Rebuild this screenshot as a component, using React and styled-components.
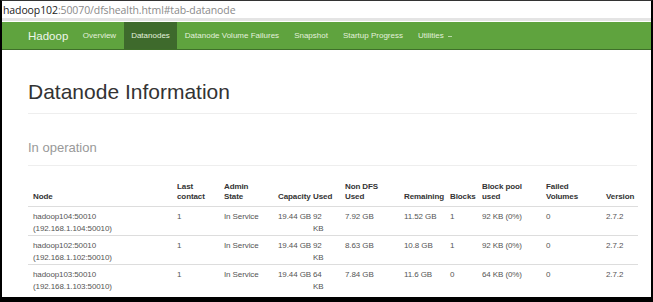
import React from "react";
import styled, { createGlobalStyle } from "styled-components";

const GlobalStyle = createGlobalStyle`
  html, body {
    margin: 0;
    padding: 0;
    background: #000;
  }
  body {
    font-family: "Liberation Sans", Arial, sans-serif;
  }
`;

const nodes = [
  { name: "hadoop104:50010", ip: "(192.168.1.104:50010)", used: ["92", "KB"], nonDfs: "7.92 GB", remaining: "11.52 GB", blocks: "1", pool: "92 KB (0%)" },
  { name: "hadoop102:50010", ip: "(192.168.1.102:50010)", used: ["92", "KB"], nonDfs: "8.63 GB", remaining: "10.8 GB", blocks: "1", pool: "92 KB (0%)" },
  { name: "hadoop103:50010", ip: "(192.168.1.103:50010)", used: ["64", "KB"], nonDfs: "7.84 GB", remaining: "11.6 GB", blocks: "0", pool: "64 KB (0%)" },
];

const colWidths = [144, 47, 54, 35, 32, 59, 46, 32, 64, 60, 37];

function App() {
  return (
    <>
      <GlobalStyle />
      <Frame>
        <AddressBar>
          <Host>hadoop102</Host>
          <Path>:50070/dfshealth.html#tab-datanode</Path>
        </AddressBar>
        <NavBar>
          <Brand>Hadoop</Brand>
          <NavItem>Overview</NavItem>
          <NavItem $active>Datanodes</NavItem>
          <NavItem>Datanode Volume Failures</NavItem>
          <NavItem>Snapshot</NavItem>
          <NavItem>Startup Progress</NavItem>
          <NavItem>
            Utilities <Caret />
          </NavItem>
        </NavBar>
        <Content>
          <PageTitle>Datanode Information</PageTitle>
          <SectionTitle>In operation</SectionTitle>
          <Table>
            <colgroup>
              {colWidths.map((w, i) => (
                <col key={i} style={{ width: w }} />
              ))}
            </colgroup>
            <thead>
              <tr>
                <Th>Node</Th>
                <Th>Last<br />contact</Th>
                <Th>Admin<br />State</Th>
                <Th>Capacity</Th>
                <Th>Used</Th>
                <Th>Non DFS<br />Used</Th>
                <Th>Remaining</Th>
                <Th>Blocks</Th>
                <Th>Block pool<br />used</Th>
                <Th>Failed<br />Volumes</Th>
                <Th>Version</Th>
              </tr>
            </thead>
            <tbody>
              {nodes.map((n) => (
                <tr key={n.name}>
                  <Td>{n.name}<br />{n.ip}</Td>
                  <Td>1</Td>
                  <Td>In Service</Td>
                  <Td>19.44 GB</Td>
                  <Td>{n.used[0]}<br />{n.used[1]}</Td>
                  <Td>{n.nonDfs}</Td>
                  <Td>{n.remaining}</Td>
                  <Td>{n.blocks}</Td>
                  <Td>{n.pool}</Td>
                  <Td>0</Td>
                  <Td>2.7.2</Td>
                </tr>
              ))}
            </tbody>
          </Table>
        </Content>
      </Frame>
    </>
  );
}

export default App;

const Frame = styled.div`
  box-sizing: border-box;
  width: 653px;
  height: 302px;
  background: #fff;
  border-left: 2px solid #000;
  border-right: 2px solid #000;
  border-bottom: 5px solid #000;
  border-top: 1px solid #333;
  overflow: hidden;
`;

const AddressBar = styled.div`
  height: 17px;
  padding-left: 1px;
  display: flex;
  align-items: center;
  font-family: "Open Sans", "Liberation Sans", sans-serif;
  font-size: 10.5px;
  letter-spacing: -0.1px;
  border-bottom: 3px solid #e4e4e4;
`;

const Host = styled.span`
  color: #222;
`;

const Path = styled.span`
  color: #8a8a8a;
`;

const NavBar = styled.div`
  margin-top: 1px;
  height: 27px;
  background: #5fa33e;
  border-bottom: 1px solid #3f6f2a;
  display: flex;
  align-items: stretch;
  padding-left: 26px;
`;

const Brand = styled.div`
  display: flex;
  align-items: center;
  color: #eef6ea;
  font-size: 11.5px;
  margin-right: 7px;
`;

const NavItem = styled.div`
  display: flex;
  align-items: center;
  padding: 0 7.5px;
  font-size: 8px;
  color: #e3f0dc;
  background: ${(p) => (p.$active ? "#3e6a2c" : "transparent")};
`;

const Caret = styled.span`
  display: inline-block;
  width: 4px;
  height: 1px;
  margin-left: 4px;
  margin-top: 2px;
  background: #b9d9a8;
`;

const Content = styled.div`
  padding: 0 14px 0 26px;
`;

const PageTitle = styled.h1`
  margin: 30px 0 0;
  padding-bottom: 9px;
  font-size: 21px;
  font-weight: 400;
  color: #333;
  border-bottom: 1px solid #eee;
  line-height: 24px;
`;

const SectionTitle = styled.h2`
  margin: 26px 0 0;
  padding-bottom: 9px;
  font-size: 13px;
  font-weight: 400;
  color: #999;
  border-bottom: 1px solid #eee;
  line-height: 16px;
`;

const Table = styled.table`
  margin-top: 16px;
  width: 610px;
  table-layout: fixed;
  border-collapse: collapse;
  font-size: 8px;
  letter-spacing: -0.1px;
  color: #444;
`;

const Th = styled.th`
  text-align: left;
  vertical-align: bottom;
  font-weight: 700;
  color: #333;
  padding: 0 5px 4px;
  line-height: 10px;
  white-space: nowrap;
  border-bottom: 1.5px solid #ddd;
`;

const Td = styled.td`
  vertical-align: top;
  padding: 4px 5px 1px;
  line-height: 11.5px;
  white-space: nowrap;
  border-top: 1px solid #ddd;
  color: #555;
`;
